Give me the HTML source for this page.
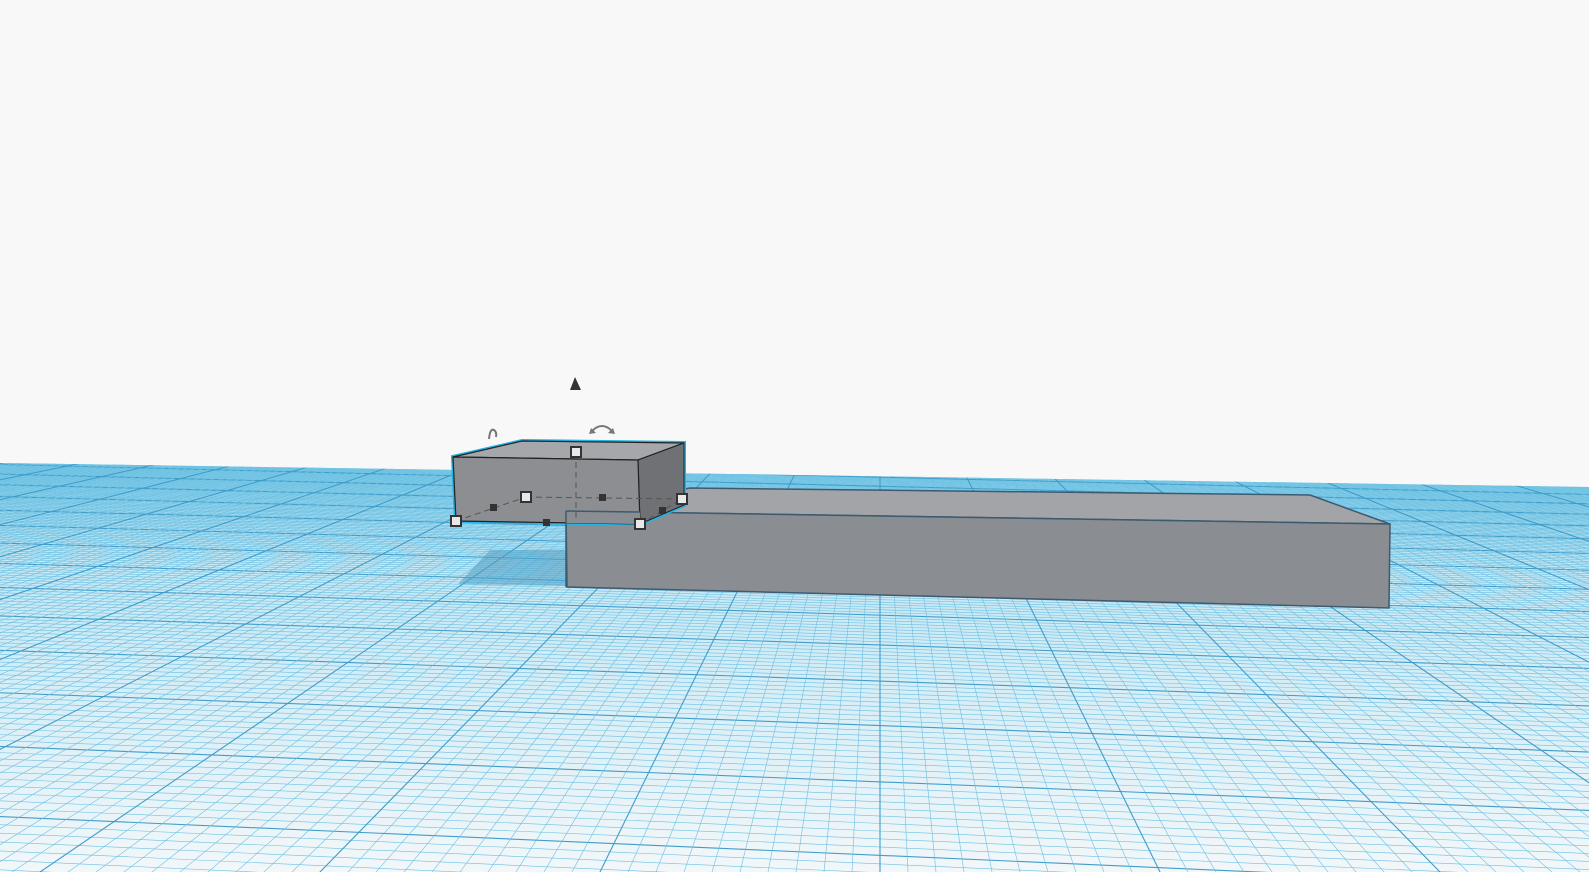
<!DOCTYPE html>
<html><head><meta charset="utf-8"><style>
html,body{margin:0;padding:0;background:#f8f8f8;overflow:hidden;width:1589px;height:872px}
svg{display:block}
</style></head><body>
<svg id="s" width="1589" height="872" viewBox="0 0 1589 872" xmlns="http://www.w3.org/2000/svg">
<defs>
<linearGradient id="pg" gradientUnits="userSpaceOnUse" x1="0" y1="463" x2="0" y2="872">
<stop offset="0" stop-color="#7fcbe8"/>
<stop offset="0.25" stop-color="#c4e7f4"/>
<stop offset="1" stop-color="#f2f7f9"/>
</linearGradient>
<clipPath id="cp"><polygon points="0,463 1589,487 1589,872 0,872"/></clipPath>
</defs>
<rect width="1589" height="872" fill="#f8f8f8"/>
<g clip-path="url(#cp)">
<rect x="0" y="440" width="1589" height="432" fill="url(#pg)"/>
<g id="grid"></g>
<polygon points="458,584 490,550 566,550 566,586" fill="#4d9ec4" opacity="0.55"/>
</g>
<polygon points="566,511 690,488 1310,495 1390,524" fill="#a2a4a7" stroke="#3d5a70" stroke-width="1.5"/>
<polygon points="566,511 1390,524 1389,608 567,587" fill="#8a8d91" stroke="#3d5a70" stroke-width="1.5"/>
<polygon points="453,457 522,441 684,443 684,505 640,524 456,521" fill="none" stroke="#1fb5e6" stroke-width="4"/>
<polygon points="453,457 522,441 684,443 638,460" fill="#a5a7aa" stroke="#222" stroke-width="1.2"/>
<polygon points="638,460 684,443 684,505 640,524" fill="#6f7174" stroke="#222" stroke-width="1"/>
<polygon points="453,457 638,460 640,524 456,521" fill="#8c8e91" stroke="#222" stroke-width="1.2"/>
<polygon points="566,511 640,512 640,524 566,523" fill="#8a8d91"/>
<line x1="566" y1="511" x2="640" y2="512" stroke="#3d5a70" stroke-width="1.5"/>
<line x1="566" y1="511" x2="566" y2="587" stroke="#3d5a70" stroke-width="1.5"/>
<g stroke="#555" stroke-width="1" stroke-dasharray="6,4" fill="none">
<line x1="576" y1="452" x2="576" y2="522"/>
<line x1="526" y1="497" x2="682" y2="499"/>
<line x1="456" y1="521" x2="526" y2="497"/>
<line x1="640" y1="524" x2="682" y2="499"/>
</g>
<g fill="#333">
<rect x="490" y="504" width="7" height="7"/><rect x="543" y="519" width="7" height="7"/>
<rect x="599" y="494" width="7" height="7"/><rect x="659" y="507" width="7" height="7"/>
</g>
<g fill="#e8e8e8" stroke="#333" stroke-width="2">
<rect x="571" y="447" width="10" height="10"/><rect x="521" y="492" width="10" height="10"/>
<rect x="451" y="516" width="10" height="10"/><rect x="635" y="519" width="10" height="10"/>
<rect x="677" y="494" width="10" height="10"/>
</g>
<polygon points="575,377 570,390 581,390" fill="#333"/>
<path d="M489 439 Q490 428 494 430 Q497 432 496 437" fill="none" stroke="#777" stroke-width="2"/>
<path d="M592 431 Q602 421 612 431" fill="none" stroke="#777" stroke-width="2"/>
<polygon points="589,434 596,433 591,428" fill="#777"/><polygon points="615,434 608,433 613,428" fill="#777"/>
</svg>
<script>
(function(){
var g=document.getElementById('grid'),h='';
var vx=880,vy=300,C=572,dz=0.0157;
var mj='#3f9dca',mn='#6cc0e2';
for(var i=-12;i<=200;i++){var z=1.03+i*dz;if(z<=0.5)continue;var yc=vy+C/z;if(yc<455)break;
var s=0.015+0.03/z;var maj=(((i%10)+10)%10==0);
var y1=yc+s*(-200-vx),y2=yc+s*(1800-vx);
h+='<line x1="-200" y1="'+y1.toFixed(1)+'" x2="1800" y2="'+y2.toFixed(1)+'" stroke="'+(maj?mj:mn)+'" stroke-width="'+(maj?1.1:0.6)+'"/>';}
for(var k=-300;k<=300;k++){var X=k*28;var maj=(k%10==0);
var ex=vx+X/4,ey=vy+C/4;var x2=vx+X*1.3,y2=vy+C*1.3;
h+='<line x1="'+ex.toFixed(1)+'" y1="'+ey.toFixed(1)+'" x2="'+x2.toFixed(1)+'" y2="'+y2.toFixed(1)+'" stroke="'+(maj?mj:mn)+'" stroke-width="'+(maj?1.1:0.6)+'"/>';}
g.innerHTML=h;
})();
</script>
</body></html>
